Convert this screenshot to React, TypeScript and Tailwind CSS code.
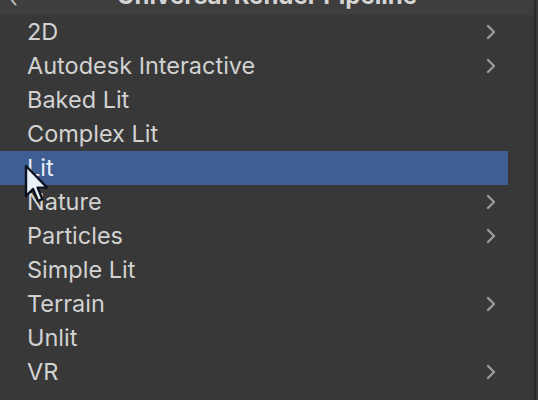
import React from "react";

const items: { label: string; sub: boolean }[] = [
  { label: "2D", sub: true },
  { label: "Autodesk Interactive", sub: true },
  { label: "Baked Lit", sub: false },
  { label: "Complex Lit", sub: false },
  { label: "Lit", sub: false },
  { label: "Nature", sub: true },
  { label: "Particles", sub: true },
  { label: "Simple Lit", sub: false },
  { label: "Terrain", sub: true },
  { label: "Unlit", sub: false },
  { label: "VR", sub: true },
];

function Chevron() {
  return (
    <svg width="12" height="18" viewBox="0 0 12 18" className="text-[#9a9a9a]">
      <path d="M3 3 L9 9 L3 15" fill="none" stroke="currentColor" strokeWidth="2.4" strokeLinecap="round" strokeLinejoin="round" />
    </svg>
  );
}

export default function App() {
  return (
    <div className="relative w-[538px] h-[400px] overflow-hidden bg-[#383838] flex" style={{ fontFamily: "Inter, 'Noto Sans', sans-serif" }}>
      <div className="flex-1 flex flex-col border-r-2 border-[#2a2a2a]">
        <div className="relative h-[15px] shrink-0 bg-[#3e3e3e] overflow-hidden">
          <div className="absolute left-[10px] top-[-15px] text-[20px] text-[#c8c8c8]">‹</div>
          <div className="absolute left-0 right-0 top-[-22px] text-center text-[24px] font-bold text-[#d4d4d4]">
            Universal Render Pipeline
          </div>
        </div>
        <div className="flex flex-col">
          {items.map((it) => (
            <div
              key={it.label}
              className={`h-[34px] flex items-center pl-[27px] pr-[40px] mr-[26px] text-[23.5px] leading-none ${
                it.label === "Lit" ? "bg-[#3f5e93] text-[#e6ecf5]" : "text-[#d2d2d2]"
              }`}
            >
              <span className="flex-1">{it.label}</span>
              {it.sub && (
                <span className="-mr-[29px] flex">
                  <Chevron />
                </span>
              )}
            </div>
          ))}
        </div>
      </div>
      <div className="w-[2px] bg-[#3a3a3a]" />
      <svg className="absolute left-[24px] top-[164px]" width="26" height="40" viewBox="0 0 13 20">
        <path d="M1 1 L1 16 L4.5 12.5 L7 18.5 L9.2 17.6 L6.8 11.8 L11.6 11.8 Z" fill="#e9f2f8" stroke="#0d1420" strokeWidth="1.2" strokeLinejoin="round" />
      </svg>
    </div>
  );
}
